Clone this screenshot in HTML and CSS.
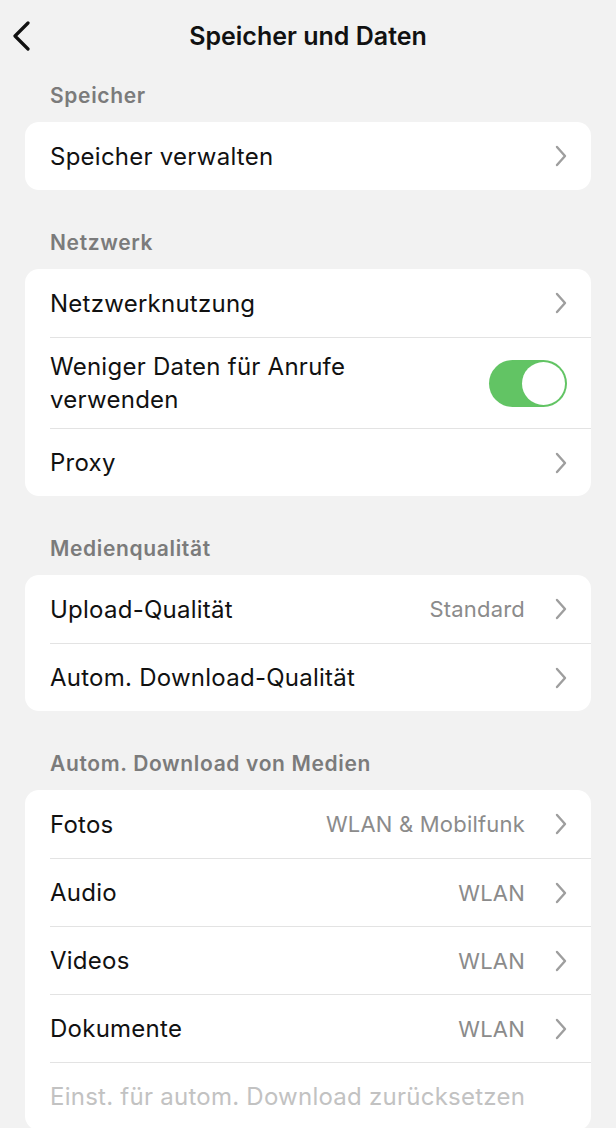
FILE: index.html
```html
<!DOCTYPE html>
<html lang="de">
<head>
<meta charset="utf-8">
<title>Speicher und Daten</title>
<link rel="stylesheet" href="styles.css">
</head>
<body>
<div class="screen">
  <header class="navbar">
    <button class="back" aria-label="Zurück">
      <svg width="20" height="30" viewBox="0 0 20 30"><path d="M16 2 L3 15 L16 28" fill="none" stroke="#111" stroke-width="3.2" stroke-linecap="round" stroke-linejoin="round"/></svg>
    </button>
    <h1 class="title">Speicher und Daten</h1>
  </header>

  <section class="section first">
    <h2 class="section-title">Speicher</h2>
    <div class="card">
      <div class="row"><span class="label">Speicher verwalten</span><svg class="chev" viewBox="0 0 14 22"><path d="M3 2 L11 11 L3 20"/></svg></div>
    </div>
  </section>

  <section class="section">
    <h2 class="section-title">Netzwerk</h2>
    <div class="card">
      <div class="row"><span class="label">Netzwerknutzung</span><svg class="chev" viewBox="0 0 14 22"><path d="M3 2 L11 11 L3 20"/></svg></div>
      <div class="row tall"><span class="label">Weniger Daten für Anrufe<br>verwenden</span><span class="toggle on"><span class="knob"></span></span></div>
      <div class="row"><span class="label">Proxy</span><svg class="chev" viewBox="0 0 14 22"><path d="M3 2 L11 11 L3 20"/></svg></div>
    </div>
  </section>

  <section class="section">
    <h2 class="section-title">Medienqualität</h2>
    <div class="card">
      <div class="row"><span class="label">Upload-Qualität</span><span class="value">Standard</span><svg class="chev" viewBox="0 0 14 22"><path d="M3 2 L11 11 L3 20"/></svg></div>
      <div class="row"><span class="label">Autom. Download-Qualität</span><svg class="chev" viewBox="0 0 14 22"><path d="M3 2 L11 11 L3 20"/></svg></div>
    </div>
  </section>

  <section class="section">
    <h2 class="section-title">Autom. Download von Medien</h2>
    <div class="card">
      <div class="row"><span class="label">Fotos</span><span class="value">WLAN &amp; Mobilfunk</span><svg class="chev" viewBox="0 0 14 22"><path d="M3 2 L11 11 L3 20"/></svg></div>
      <div class="row"><span class="label">Audio</span><span class="value">WLAN</span><svg class="chev" viewBox="0 0 14 22"><path d="M3 2 L11 11 L3 20"/></svg></div>
      <div class="row"><span class="label">Videos</span><span class="value">WLAN</span><svg class="chev" viewBox="0 0 14 22"><path d="M3 2 L11 11 L3 20"/></svg></div>
      <div class="row"><span class="label">Dokumente</span><span class="value">WLAN</span><svg class="chev" viewBox="0 0 14 22"><path d="M3 2 L11 11 L3 20"/></svg></div>
      <div class="row"><span class="label disabled">Einst. für autom. Download zurücksetzen</span></div>
    </div>
  </section>
</div>
</body>
</html>
```
FILE: styles.css
```css
* { box-sizing: border-box; }
html, body { margin: 0; padding: 0; }
body {
  background: #f2f2f2;
  font-family: Inter, "Liberation Sans", Arial, sans-serif;
  color: #111;
  width: 616px;
  height: 1128px;
  overflow: hidden;
}
.screen { width: 616px; }
.navbar {
  position: relative;
  height: 72px;
  display: flex;
  align-items: center;
  justify-content: center;
}
.back {
  position: absolute;
  left: 12px;
  top: 21px;
  border: 0;
  background: none;
  padding: 0;
  width: 20px;
  height: 30px;
}
.back svg { display: block; }
.title {
  margin: 0;
  font-size: 25px;
  font-weight: 600;
  letter-spacing: 0;
}
.section { margin-top: 29px; }
.section.first { margin-top: 0; }
.section-title {
  margin: 0;
  padding: 12px 0 14px 50px;
  line-height: 24px;
  font-size: 21px;
  font-weight: 600;
  letter-spacing: 0.65px;
  color: #7b7b7b;
}
.card {
  margin: 0 25px;
  background: #fff;
  border-radius: 14px;
  overflow: hidden;
}
.row {
  display: flex;
  align-items: center;
  min-height: 68px;
  margin-left: 25px;
  padding-right: 23px;
  border-top: 1px solid #e3e3e3;
}
.row:first-child { border-top: 0; }
.row.tall { min-height: 90px; padding-top: 12px; padding-bottom: 12px; padding-right: 24px; }
.label {
  flex: 1;
  font-size: 24px;
  line-height: 33px;
  letter-spacing: 0.25px;
  color: #111;
}
.label.disabled { color: #c2c2c2; }
.value {
  font-size: 22px;
  letter-spacing: 0.2px;
  color: #8b8b8b;
  margin-right: 29px;
}
.chev {
  width: 14px;
  height: 22px;
  flex: none;
  fill: none;
  stroke: #9e9e9e;
  stroke-width: 2.4;
  stroke-linecap: round;
  stroke-linejoin: round;
}
.toggle {
  width: 78px;
  height: 47px;
  border-radius: 24px;
  background: #62c464;
  position: relative;
  flex: none;
}
.knob {
  position: absolute;
  right: 2px;
  top: 2px;
  width: 43px;
  height: 43px;
  border-radius: 50%;
  background: #fff;
}
```
